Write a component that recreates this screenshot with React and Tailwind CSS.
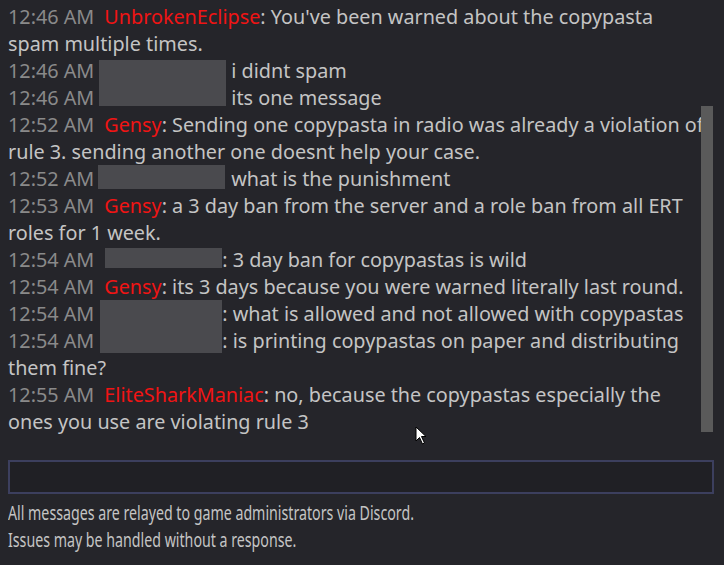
import React from "react";

const messages = [
  { time: "12:46 AM", name: "UnbrokenEclipse", text: ": You've been warned about the copypasta spam multiple times." },
  { time: "12:46 AM", hidden: { w: 127, l: -5, r: 5, t: 3.5, b: 0 }, text: "i didnt spam" },
  { time: "12:46 AM", hidden: { w: 127, l: -5, r: 5, t: 0, b: 4.5 }, text: "its one message" },
  { time: "12:52 AM", name: "Gensy", text: ": Sending one copypasta in radio was already a violation of rule 3. sending another one doesnt help your case." },
  { time: "12:52 AM", hidden: { w: 127, l: -6, r: 6, t: 0, b: 2.5 }, text: "what is the punishment" },
  { time: "12:53 AM", name: "Gensy", text: ": a 3 day ban from the server and a role ban from all ERT roles for 1 week." },
  { time: "12:54 AM", hidden: { w: 118, l: 1, r: 0, t: 2.5, b: 5 }, text: ": 3 day ban for copypastas is wild" },
  { time: "12:54 AM", name: "Gensy", text: ": its 3 days because you were warned literally last round." },
  { time: "12:54 AM", hidden: { w: 118, l: -4, r: 0, t: 0.5, b: 0 }, text: ": what is allowed and not allowed with copypastas" },
  { time: "12:54 AM", hidden: { w: 118, l: -4, r: 0, t: 0, b: 0.5 }, text: ": is printing copypastas on paper and distributing them fine?" },
  { time: "12:55 AM", name: "EliteSharkManiac", text: ": no, because the copypastas especially the ones you use are violating rule 3" },
];

function Hidden({ box }) {
  return (
    <span className="relative inline-block h-[27px] align-top" style={{ width: box.w }}>
      <span
        className="absolute bg-[#4a4a4e]"
        style={{ left: box.l, right: box.r, top: box.t, bottom: box.b }}
      />
    </span>
  );
}

export default function App() {
  return (
    <div
      className="w-[724px] h-[565px] bg-[#25252a] flex flex-col overflow-hidden"
      style={{ fontFamily: '"Noto Sans", "Open Sans", sans-serif' }}
    >
      {/* Chat log */}
      <div className="relative h-[460px] shrink-0 pt-[2.5px] pl-[8px]">
        <div className="w-[696px] text-[19.8px] leading-[27px] text-[#c4c4c4]">
          {messages.map((m, i) => (
            <p key={i}>
              <span className="mr-[10px] text-[#8a8a8a]">{m.time}</span>
              {m.name && <span className="text-[#f01414]">{m.name}</span>}
              {m.hidden && <Hidden box={m.hidden} />}
              {m.text}
            </p>
          ))}
        </div>

        {/* Scrollbar */}
        <div className="absolute left-[701px] top-[106px] w-[12px] h-[326px] bg-[#5a5a5a]" />

        {/* Mouse pointer */}
        <svg className="absolute left-[415px] top-[426px]" width="14" height="20" viewBox="0 0 14 20">
          <path d="M1 1 L1 15 L4.5 11.5 L7.5 18 L9.5 17 L6.5 10.5 L11 10.5 Z" fill="#fff" stroke="#000" strokeWidth="1" />
        </svg>
      </div>

      {/* Input */}
      <div className="mx-[8px] h-[34px] w-[706px] shrink-0 border-2 border-[#3c3f5e] bg-[#202025]" />

      {/* Footer */}
      <div className="mt-[5px] px-[8px] text-[20px] leading-[27px] text-[#c4c4c4]">
        <p className="origin-left scale-x-[0.71] whitespace-nowrap">All messages are relayed to game administrators via Discord.</p>
        <p className="origin-left scale-x-[0.71] whitespace-nowrap">Issues may be handled without a response.</p>
      </div>
    </div>
  );
}
